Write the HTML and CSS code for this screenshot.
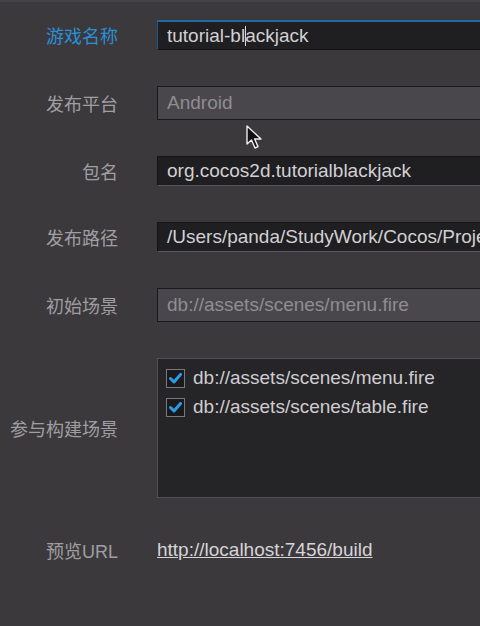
FILE: index.html
```html
<!DOCTYPE html>
<html>

<head>
    <meta charset="UTF-8">
    <title>构建发布</title>
    <link rel="stylesheet" href="styles.css">
</head>

<body>

    <div class="panel">
        <div class="form">
            <label class="label active">游戏名称</label>
            <div class="field focus">
                <span>tutorial-bl</span><span class="caret"></span><span>ackjack</span>
            </div>

            <label class="label">发布平台</label>
            <div class="field disabled">Android</div>

            <label class="label">包名</label>
            <div class="field">org.cocos2d.tutorialblackjack</div>

            <label class="label">发布路径</label>
            <div class="field">/Users/panda/StudyWork/Cocos/Projects/tutorial-blackjack/build</div>

            <label class="label">初始场景</label>
            <div class="field disabled">db://assets/scenes/menu.fire</div>

            <label class="label">参与构建场景</label>
            <div class="scene-list">
                <div class="scene-item">
                    <span class="check">
                        <svg width="13" height="11" viewBox="0 0 13 11">
                            <path d="M1.5 5.5 L5 9 L11.5 1.5" fill="none" stroke="#2b9be6" stroke-width="3" stroke-linecap="round" stroke-linejoin="round"/>
                        </svg>
                    </span>
                    <span>db://assets/scenes/menu.fire</span>
                </div>
                <div class="scene-item">
                    <span class="check">
                        <svg width="13" height="11" viewBox="0 0 13 11">
                            <path d="M1.5 5.5 L5 9 L11.5 1.5" fill="none" stroke="#2b9be6" stroke-width="3" stroke-linecap="round" stroke-linejoin="round"/>
                        </svg>
                    </span>
                    <span>db://assets/scenes/table.fire</span>
                </div>
            </div>

            <label class="label">预览URL</label>
            <div class="link-row"><a href="#">http://localhost:7456/build</a></div>
        </div>
    </div>

    <!-- puntero del ratón -->
    <svg class="pointer" width="18" height="26" viewBox="0 0 18 26">
        <path d="M1 1 L1 19 L5.5 15 L9 23 L12 21.6 L8.6 14 L15 14 Z" fill="#111" stroke="#eee" stroke-width="1.4" stroke-linejoin="round"/>
    </svg>

</body>

</html>
```

FILE: styles.css
```css
/* styles.css */

body {
    margin: 0;
    padding: 0;
    background-color: #3b393c;
    font-family: "Liberation Sans", "Noto Sans CJK SC", sans-serif;
    overflow: hidden;
    height: 626px;
}

.panel {
    border-top: 2px solid #454347;
    padding-top: 18px;
}

.form {
    display: grid;
    grid-template-columns: 118px 420px;
    column-gap: 39px;
    row-gap: 36px;
    align-items: center;
}

.label {
    text-align: right;
    font-size: 18px;
    color: #a09ea2;
    white-space: nowrap;
}

.label.active {
    color: #2b8fd6;
}

/* campos de texto */
.field {
    height: 30px;
    box-sizing: border-box;
    display: flex;
    align-items: center;
    padding: 0 9px;
    background-color: #1f1e21;
    border: 1px solid #151416;
    border-bottom-color: #58565a;
    color: #d2d0d4;
    font-size: 19px;
    white-space: nowrap;
    overflow: hidden;
}

.field.focus {
    border: 1px solid #1d5a8a;
    border-top: 2px solid #1e6aa3;
    border-bottom-color: #121114;
}

.field.disabled {
    background-color: #49474c;
    border-color: #1a191c;
    color: #8f8d92;
    height: 34px;
}

/* cursor de texto, sin ocupar espacio */
.caret {
    display: inline-block;
    width: 0;
    height: 20px;
    border-left: 1px solid #d8d8d8;
    margin-right: -1px;
}

/* lista de escenas */
.scene-list {
    height: 140px;
    box-sizing: border-box;
    background-color: #252427;
    border: 1px solid #515054;
    padding: 9px 8px;
    display: flex;
    flex-direction: column;
    gap: 9px;
}

.scene-item {
    display: flex;
    align-items: center;
    gap: 8px;
    font-size: 19px;
    color: #cfcdd1;
    height: 20px;
}

.check {
    width: 19px;
    height: 19px;
    box-sizing: border-box;
    border: 1px solid #7a787d;
    background-color: #1a191c;
    display: flex;
    align-items: center;
    justify-content: center;
}

.link-row {
    height: 32px;
    display: flex;
    align-items: center;
}

.link-row a {
    color: #d6d4d8;
    font-size: 19px;
    text-decoration: underline;
}

.pointer {
    position: absolute;
    left: 246px;
    top: 125px;
}
```
